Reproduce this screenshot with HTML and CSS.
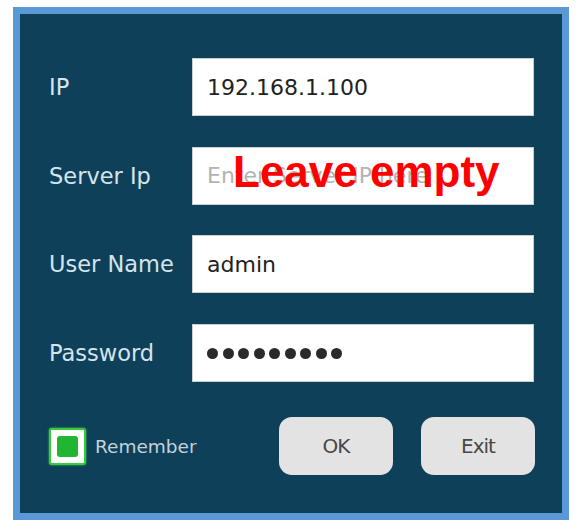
FILE: index.html
```html
<!DOCTYPE html>
<html lang="en">
<head>
    <meta charset="UTF-8">
    <title>Login</title>
    <link rel="stylesheet" href="styles.css">
</head>
<body>
    <div class="panel">
        <div class="form-grid">
            <div class="label">IP</div>
            <div class="field">192.168.1.100</div>

            <div class="label">Server Ip</div>
            <div class="field note-field">
                <span class="placeholder">Enter Server IP here</span>
                <span class="note">Leave empty</span>
            </div>

            <div class="label">User Name</div>
            <div class="field">admin</div>

            <div class="label">Password</div>
            <div class="field">
                <div class="dots">
                    <span></span><span></span><span></span>
                    <span></span><span></span><span></span>
                    <span></span><span></span><span></span>
                </div>
            </div>
        </div>

        <div class="bottom-row">
            <div class="remember">
                <div class="check"><div class="check-fill"></div></div>
                <span>Remember</span>
            </div>
            <div class="buttons">
                <div class="btn">OK</div>
                <div class="btn">Exit</div>
            </div>
        </div>
    </div>
</body>
</html>
```

FILE: styles.css
```css
body {
    margin: 0;
    padding: 0;
    background-color: #fff;
    font-family: "DejaVu Sans", Verdana, sans-serif;
}
.panel {
    margin: 7px 0 0 13px;
    width: 542px;
    height: 499px;
    border: 7px solid #5b98d6;
    background-color: #0e4159;
    box-sizing: content-box;
}
.form-grid {
    display: grid;
    grid-template-columns: 143px 342px;
    grid-auto-rows: 58px;
    row-gap: 30.7px;
    padding: 44px 0 0 29px;
}
.label {
    display: flex;
    align-items: center;
    color: #d6e4ec;
    font-size: 22.5px;
}
.field {
    display: flex;
    align-items: center;
    background-color: #fff;
    border: 1px solid #c9ced2;
    box-sizing: border-box;
    padding-left: 14px;
    color: #222;
    font-size: 22px;
}
.note-field {
    position: relative;
}
.placeholder {
    color: #b3b3b3;
}
.note {
    position: absolute;
    left: 40px;
    top: 2px;
    font-family: "Liberation Sans", Arial, sans-serif;
    font-weight: bold;
    font-size: 44px;
    line-height: 44px;
    color: #ff0000;
}
.dots {
    display: flex;
    gap: 4.5px;
}
.dots span {
    width: 11px;
    height: 11px;
    border-radius: 50%;
    background-color: #2a2a2a;
}
.bottom-row {
    display: flex;
    align-items: center;
    justify-content: space-between;
    padding: 35px 27px 0 29px;
}
.remember {
    display: flex;
    align-items: center;
    gap: 9px;
    color: #c3d2db;
    font-size: 18.5px;
}
.check {
    width: 37px;
    height: 37px;
    box-sizing: border-box;
    border: 2px solid #35cc3a;
    border-radius: 3px;
    background-color: #fff;
    display: flex;
    align-items: center;
    justify-content: center;
    box-shadow: 0 0 2px #4de04d;
}
.check-fill {
    width: 21px;
    height: 21px;
    border-radius: 3px;
    background-color: #22b532;
}
.buttons {
    display: flex;
    gap: 28px;
}
.btn {
    width: 114px;
    height: 58px;
    border-radius: 13px;
    background-color: #e3e3e3;
    display: flex;
    align-items: center;
    justify-content: center;
    color: #474747;
    font-size: 20px;
    letter-spacing: -1px;
}
```
